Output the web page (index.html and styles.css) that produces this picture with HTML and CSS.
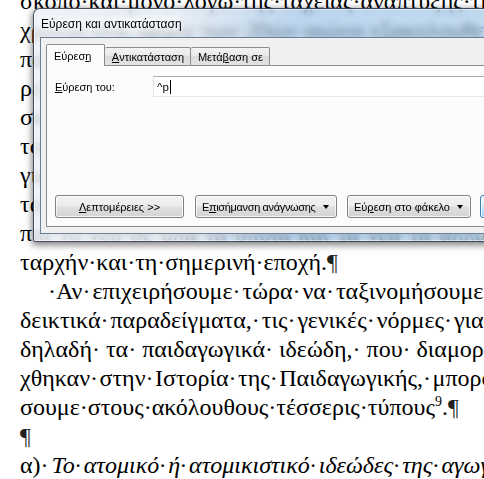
FILE: index.html
```html
<!DOCTYPE html>
<html lang="el">
<head>
<meta charset="utf-8">
<title>Εύρεση και αντικατάσταση</title>
<link rel="stylesheet" href="styles.css">
</head>
<body>
<div class="doc">
  <div class="line">σκοπό·και·μόνο·λόγω·της·ταχείας·ανάπτυξης·της·επιστήμης</div>
  <div class="line">χρόνια·στις·αρχές·των·20ών·αιώνα·εξακολουθεί·να</div>
  <div class="line">παιδαγωγικές·θεωρίες·και·συστήματα·που·αναπτύχθηκαν</div>
  <div class="line">ρεύματα·και·τάσεις·της·εποχής·τους·και·διαμόρφωσαν</div>
  <div class="line">σκέψη·και·την·πράξη·της·αγωγής·στους·αιώνες·που</div>
  <div class="line">τους·ακολούθησαν·μέχρι·σήμερα·με·τρόπο·καθοριστικό</div>
  <div class="line">για·την·ιστορική·εξέλιξη·της·παιδαγωγικής·επιστήμης</div>
  <div class="line">τα·ιδεώδη·της·αγωγής·που·διατυπώθηκαν·από·την·αρχαιότητα</div>
  <div class="line">πια·το·νέο·σε·όλα·τα·οποία·και·τα·νέα·τα·άλλα·του·τόσο·σκοπού</div>
  <div class="line">ταρχήν·και·τη·σημερινή·εποχή.<span class="mark">¶</span></div>
  <div class="line indent j2">·Αν· επιχειρήσουμε· τώρα· να· ταξινομήσουμε· τα· παραπάνω</div>
  <div class="line j2">δεικτικά· παραδείγματα,· τις· γενικές· νόρμες· για· την· αγωγή</div>
  <div class="line">δηλαδή· τα· παιδαγωγικά· ιδεώδη,· που· διαμορφώθηκαν</div>
  <div class="line j15">χθηκαν· στην· Ιστορία· της· Παιδαγωγικής,· μπορούμε· να</div>
  <div class="line">σουμε·στους·ακόλουθους·τέσσερις·τύπους<sup class="fn">9</sup>.<span class="mark">¶</span></div>
  <div class="line"><span class="mark">¶</span></div>
  <div class="line j3">α)· <em>Το· ατομικό· ή· ατομικιστικό· ιδεώδες· της· αγωγής</em></div>
</div>

<div class="dialog">
  <div class="titlebar"><span class="title">Εύρεση και αντικατάσταση</span></div>
  <div class="client">
    <div class="tabs">
      <div class="tab active">Εύρεσ<u>η</u></div>
      <div class="tab"><u>Α</u>ντικατάσταση</div>
      <div class="tab">Μετά<u>β</u>αση σε</div>
    </div>
    <div class="panel">
      <div class="row">
        <label class="label"><u>Ε</u>ύρεση του:</label>
        <div class="input"><span>^p</span><span class="caret"></span></div>
      </div>
      <div class="buttons">
        <div class="btn b1"><u>Λ</u>επτομέρειες &gt;&gt;</div>
        <div class="btn drop b2"><span class="narrow">Ε<u>π</u>ισήμανση ανάγνωσης</span><span class="arrow"></span></div>
        <div class="btn drop b3"><span>Εύ<u>ρ</u>εση στο φάκελο</span><span class="arrow"></span></div>
        <div class="btn default b4">Εύρεση επομένου</div>
      </div>
    </div>
  </div>
</div>
</body>
</html>
```
FILE: styles.css
```css
html, body {
  margin: 0;
  padding: 0;
}
body {
  width: 484px;
  height: 479px;
  overflow: hidden;
  background: #ffffff;
  position: relative;
}
.doc {
  margin-top: -13px;
  padding-left: 20px;
  font-family: "Liberation Serif", "Times New Roman", serif;
  font-size: 24px;
  color: #000;
}
.line {
  height: 29px;
  line-height: 29px;
  white-space: nowrap;
  word-spacing: 0;
}
.indent {
  padding-left: 28px;
}
/* lines stretched by justification: "· " = dot + reduced space */
.j15 { word-spacing: -4.5px; }
.j2 { word-spacing: -4px; }
.j3 { word-spacing: -3px; }
.mark {
  color: #222;
}
.fn {
  font-size: 14px;
  line-height: 0;
  vertical-align: 9px;
}
em {
  font-style: italic;
}

/* Dialog */
.dialog {
  position: absolute;
  left: 33px;
  top: 8px;
  width: 540px;
  height: 234px;
  box-sizing: border-box;
  border: 1px solid rgba(30, 40, 60, 0.8);
  border-radius: 7px 7px 2px 2px;
  padding: 0 6px 7px 6px;
  display: flex;
  flex-direction: column;
  background:
    linear-gradient(90deg, rgba(235, 240, 246, 0.8) 0px, rgba(222, 231, 241, 0.7) 140px, rgba(150, 190, 228, 0.62) 260px, rgba(160, 198, 232, 0.62) 100%);
  backdrop-filter: blur(3.5px);
  box-shadow: 0 2px 7px 1px rgba(0, 0, 0, 0.5), inset 0 0 0 1px rgba(255, 255, 255, 0.55);
  font-family: "Liberation Sans", Arial, sans-serif;
  font-size: 11px;
  color: #000;
}
.titlebar {
  height: 28px;
  display: flex;
  align-items: center;
  padding-left: 1px;
}
.title {
  font-size: 12px;
  text-shadow: 0 0 6px #fff, 0 0 8px #fff, 0 0 10px #fff;
  margin-top: 1px;
}
.client {
  flex: 1;
  background: #f0f0f0;
  border: 1px solid #6d7f96;
  display: flex;
  flex-direction: column;
  padding: 0 0 6px 5px;
}
.tabs {
  display: flex;
  align-items: flex-end;
  height: 27px;
}
.tab {
  height: 18px;
  box-sizing: border-box;
  border: 1px solid #898c95;
  border-bottom: none;
  border-left: none;
  border-radius: 2px 2px 0 0;
  background: linear-gradient(#f3f3f3, #e8e8e8 50%, #dcdcdc 50%, #e2e2e2);
  padding: 0 7px;
  display: flex;
  align-items: center;
  white-space: nowrap;
  flex-shrink: 0;
}
.tab.active {
  height: 22px;
  border-left: 1px solid #898c95;
  background: #fcfcfc;
  padding: 0 13px 0 7px;
  position: relative;
  top: 1px;
  z-index: 1;
}
.tab:nth-child(2) {
  width: 86px;
  justify-content: center;
}
.tab:nth-child(3) {
  width: 79px;
  justify-content: center;
}
.panel {
  flex: 1;
  background: #fcfcfc;
  border: 1px solid #898c95;
  padding: 10px 0 8px 8px;
  display: flex;
  flex-direction: column;
}
.row {
  display: flex;
  align-items: center;
  height: 21px;
}
.label {
  width: 98px;
  flex-shrink: 0;
  padding-top: 1px;
}
.input {
  flex: 1;
  height: 21px;
  box-sizing: border-box;
  border: 1px solid #abadb3;
  border-left-color: #e2e3ea;
  border-right-color: #dbdfe6;
  border-bottom-color: #e3e9ef;
  background: #fff;
  display: flex;
  align-items: center;
  padding-left: 3px;
  font-size: 11.5px;
}
.caret {
  display: inline-block;
  width: 1px;
  height: 14px;
  background: #000;
  margin-left: 1px;
}
.buttons {
  margin-top: auto;
  display: flex;
  gap: 10px;
}
.btn {
  flex-shrink: 0;
  height: 23px;
  box-sizing: border-box;
  border: 1px solid #7f8184;
  border-radius: 3px;
  background: linear-gradient(#f3f3f3, #ececec 48%, #dfdfdf 52%, #d4d4d4);
  box-shadow: inset 0 0 0 1px rgba(255, 255, 255, 0.75);
  display: flex;
  align-items: center;
  justify-content: center;
  white-space: nowrap;
  padding-top: 1px;
}
.b1 { width: 129px; }
.b2 { width: 142px; margin-left: 1px; }
.b3 { width: 124px; }
.b4 { width: 130px; margin-left: -1px; }
.narrow {
  letter-spacing: -0.35px;
}
.drop {
  justify-content: space-between;
  padding: 1px 7px 0 6px;
}
.arrow {
  width: 0;
  height: 0;
  border-left: 3.5px solid transparent;
  border-right: 3.5px solid transparent;
  border-top: 4px solid #000;
}
.default {
  border-color: #3c7fb1;
  background: linear-gradient(#eaf6fd, #d9f0fc 48%, #bee6fd 52%, #a7d9f5);
  box-shadow: inset 0 0 0 1px rgba(255, 255, 255, 0.8);
  justify-content: flex-start;
  padding-left: 12px;
}
u {
  text-decoration: underline;
  text-underline-offset: 1px;
}
```
